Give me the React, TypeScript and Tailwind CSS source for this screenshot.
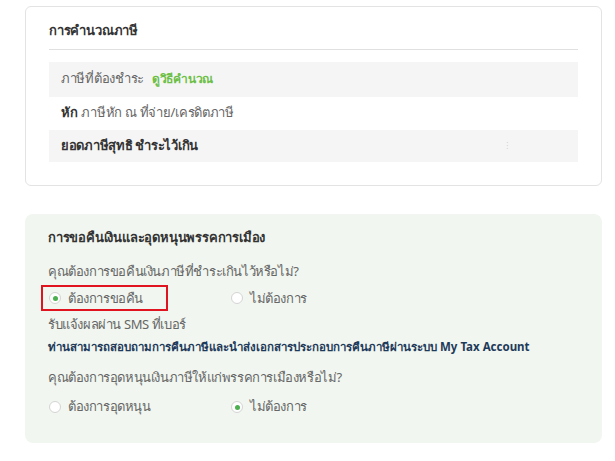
import { FC } from 'react';

type RadioProps = {
  label: string;
  checked?: boolean;
  className?: string;
};

const Radio: FC<RadioProps> = ({ label, checked, className }) => (
  <label className={`flex items-center gap-[7px] ${className ?? ''}`}>
    <span className="flex h-[12px] w-[12px] items-center justify-center rounded-full border border-[#d4d4d4] bg-white">
      {checked && <span className="h-[5px] w-[5px] rounded-full bg-[#4caf50]" />}
    </span>
    <span className="text-[13px] tracking-[-0.4px] text-[#666]">{label}</span>
  </label>
);

const TaxCalcCard: FC = () => (
  <div className="rounded-[6px] border border-[#e3e3e3] bg-white px-[23px] pb-[23px] pt-[14px]">
    <h2 className="pb-[8px] text-[13px] font-bold tracking-[-0.2px] text-[#333]">การคำนวณภาษี</h2>
    <div className="mb-[12px] border-t border-[#e0e0e0]" />
    <div className="flex h-[35px] items-center bg-[#f5f5f5] px-[12px] text-[13px] tracking-[-0.3px] text-[#666]">
      ภาษีที่ต้องชำระ
      <span className="ml-[8px] text-[12px] font-bold text-[#6cbf45]">ดูวิธีคำนวณ</span>
    </div>
    <div className="flex h-[33px] items-center px-[12px] text-[13px] tracking-[-0.3px] text-[#666]">
      <span className="mr-[4px] font-bold text-[#333]">หัก</span>ภาษีหัก ณ ที่จ่าย/เครดิตภาษี
    </div>
    <div className="flex h-[32px] items-center justify-between bg-[#f5f5f5] px-[12px] text-[13px] tracking-[-0.3px]">
      <span className="font-bold text-[#333]">ยอดภาษีสุทธิ ชำระไว้เกิน</span>
      <span className="mr-[58px] text-[8px] leading-none text-[#ccc]">⁝</span>
    </div>
  </div>
);

const RefundCard: FC = () => (
  <div className="rounded-[8px] bg-[#f1f6f0] px-[23px] pb-[26px] pt-[14px]">
    <h2 className="text-[13px] font-bold tracking-[-0.2px] text-[#333]">การขอคืนเงินและอุดหนุนพรรคการเมือง</h2>
    <p className="mt-[15px] text-[13px] tracking-[-0.4px] text-[#666]">คุณต้องการขอคืนเงินภาษีที่ชำระเกินไว้หรือไม่?</p>
    <div className="relative mt-[7px] flex items-center">
      <div className="pointer-events-none absolute left-[-7px] top-1/2 h-[26px] w-[127px] -translate-y-1/2 border-2 border-[#e0141e]" />
      <Radio label="ต้องการขอคืน" checked className="w-[183px] pl-[1px]" />
      <Radio label="ไม่ต้องการ" />
    </div>
    <p className="mt-[7px] text-[13px] tracking-[-0.4px] text-[#666]">รับแจ้งผลผ่าน SMS ที่เบอร์</p>
    <p className="mt-[3px] text-[11.5px] font-bold text-[#1e3a5a]">
      ท่านสามารถสอบถามการคืนภาษีและนำส่งเอกสารประกอบการคืนภาษีผ่านระบบ My Tax Account
    </p>
    <p className="mt-[13px] text-[13px] tracking-[-0.4px] text-[#666]">คุณต้องการอุดหนุนเงินภาษีให้แก่พรรคการเมืองหรือไม่?</p>
    <div className="mt-[10px] flex items-center">
      <Radio label="ต้องการอุดหนุน" className="w-[183px] pl-[1px]" />
      <Radio label="ไม่ต้องการ" checked />
    </div>
  </div>
);

const App: FC = () => (
  <div
    className="min-h-[461px] w-[615px] bg-white px-[25px] pt-[6px]"
    style={{ fontFamily: '"Noto Sans", "Liberation Sans", sans-serif' }}
  >
    <div className="w-[577px]">
      <TaxCalcCard />
      <div className="h-[28px]" />
      <RefundCard />
    </div>
  </div>
);

export default App;
